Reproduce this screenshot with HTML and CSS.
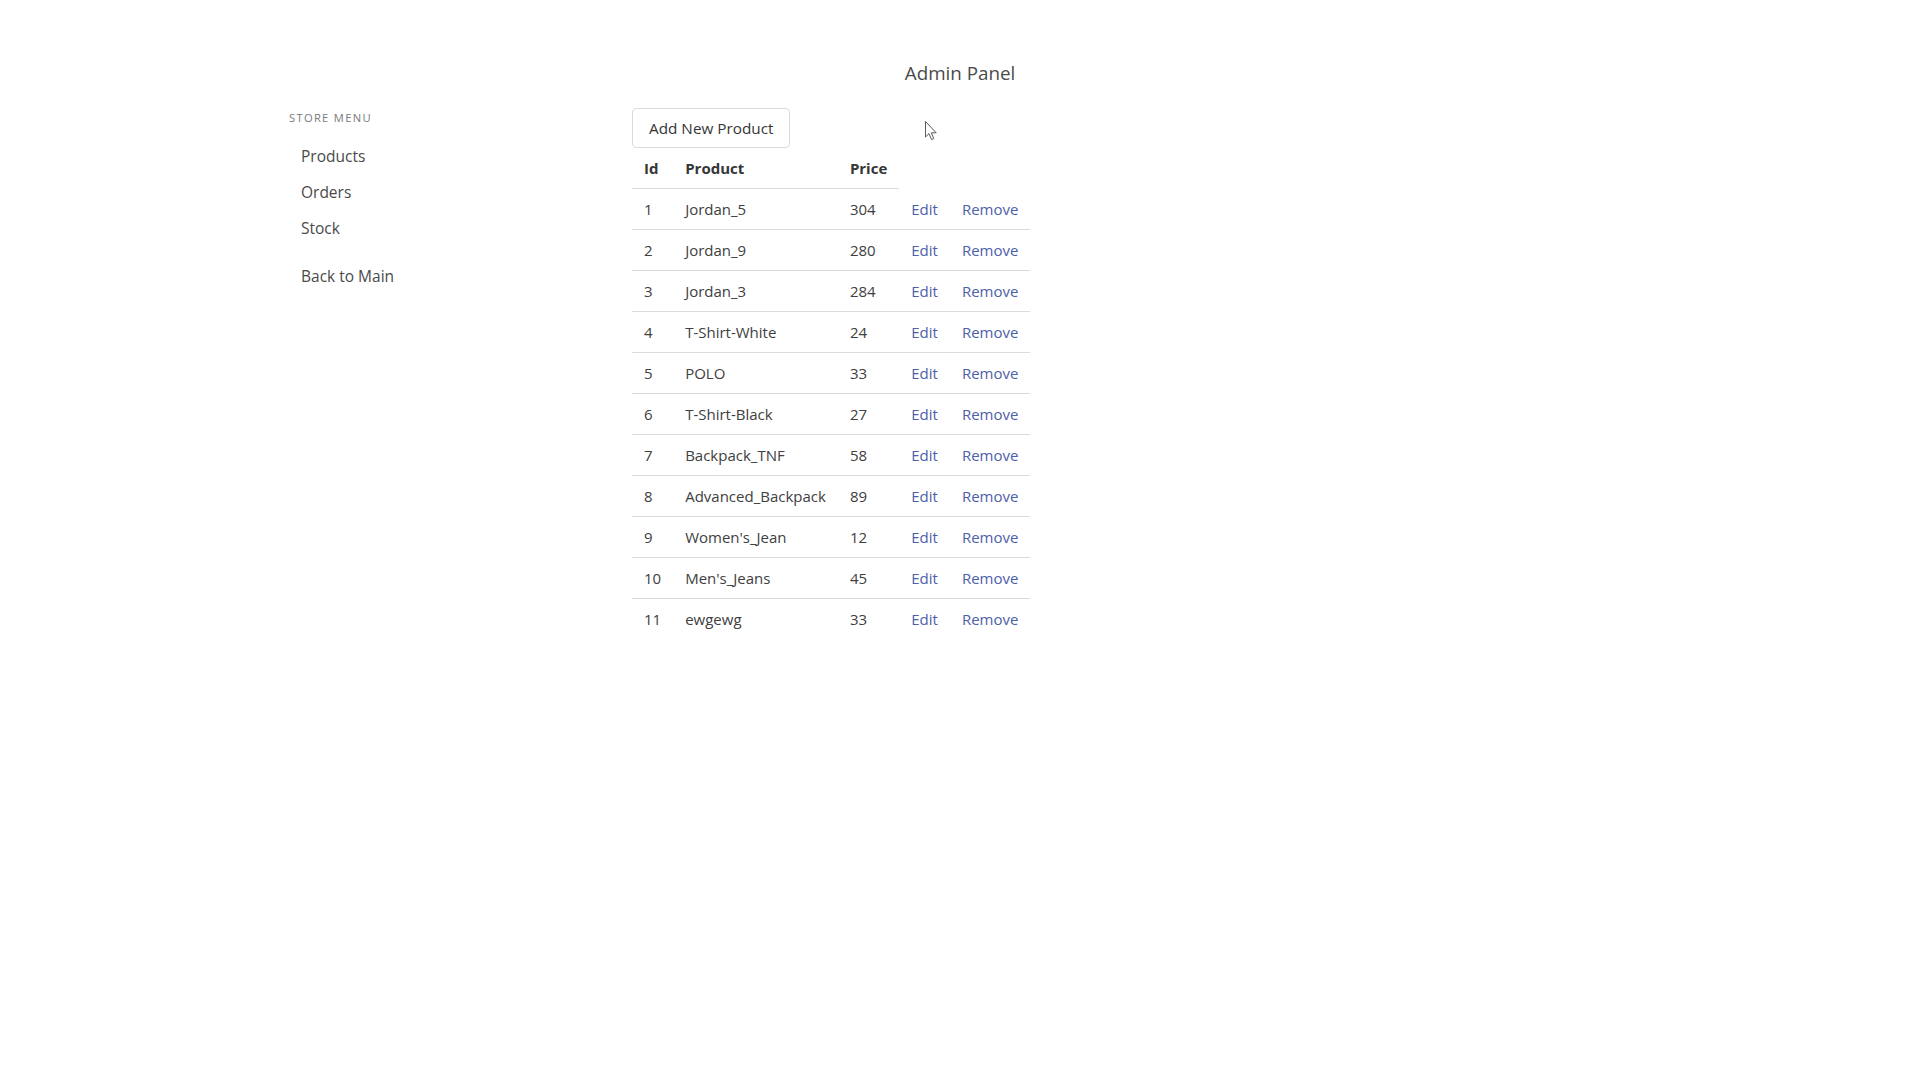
FILE: index.html
```html
<!DOCTYPE html>
<html lang="en">
<head>
<meta charset="utf-8">
<title>Admin Panel</title>
<link rel="stylesheet" href="styles.css">
</head>
<body>
<div class="container">
  <h1 class="title">Admin Panel</h1>
  <div class="columns">
    <aside class="sidebar">
      <p class="menu-label">Store Menu</p>
      <ul class="menu-list">
        <li><a href="#">Products</a></li>
        <li><a href="#">Orders</a></li>
        <li><a href="#">Stock</a></li>
      </ul>
      <ul class="menu-list back">
        <li><a href="#">Back to Main</a></li>
      </ul>
    </aside>
    <main class="main">
      <button class="btn" type="button">Add New Product</button>
      <table class="table">
        <thead>
          <tr><th>Id</th><th>Product</th><th>Price</th></tr>
        </thead>
        <tbody>
          <tr><td>1</td><td>Jordan_5</td><td>304</td><td><a href="#">Edit</a></td><td><a href="#">Remove</a></td></tr>
          <tr><td>2</td><td>Jordan_9</td><td>280</td><td><a href="#">Edit</a></td><td><a href="#">Remove</a></td></tr>
          <tr><td>3</td><td>Jordan_3</td><td>284</td><td><a href="#">Edit</a></td><td><a href="#">Remove</a></td></tr>
          <tr><td>4</td><td>T-Shirt-White</td><td>24</td><td><a href="#">Edit</a></td><td><a href="#">Remove</a></td></tr>
          <tr><td>5</td><td>POLO</td><td>33</td><td><a href="#">Edit</a></td><td><a href="#">Remove</a></td></tr>
          <tr><td>6</td><td>T-Shirt-Black</td><td>27</td><td><a href="#">Edit</a></td><td><a href="#">Remove</a></td></tr>
          <tr><td>7</td><td>Backpack_TNF</td><td>58</td><td><a href="#">Edit</a></td><td><a href="#">Remove</a></td></tr>
          <tr><td>8</td><td>Advanced_Backpack</td><td>89</td><td><a href="#">Edit</a></td><td><a href="#">Remove</a></td></tr>
          <tr><td>9</td><td>Women's_Jean</td><td>12</td><td><a href="#">Edit</a></td><td><a href="#">Remove</a></td></tr>
          <tr><td>10</td><td>Men's_Jeans</td><td>45</td><td><a href="#">Edit</a></td><td><a href="#">Remove</a></td></tr>
          <tr><td>11</td><td>ewgewg</td><td>33</td><td><a href="#">Edit</a></td><td><a href="#">Remove</a></td></tr>
        </tbody>
      </table>
    </main>
  </div>
</div>
<svg class="cursor" width="13" height="20" viewBox="0 0 13 20" aria-hidden="true">
  <path d="M0.5 0.5 L0.5 16 L4 12.6 L6.6 18.6 L8.8 17.6 L6.3 11.8 L11.2 11.8 Z" fill="#ffffff" stroke="#5a5a5a" stroke-width="1" stroke-linejoin="round"/>
</svg>
</body>
</html>
```
FILE: styles.css
```css
html, body {
  margin: 0;
  padding: 0;
  background: #ffffff;
}

body {
  font-family: "Open Sans", "Noto Sans", "Liberation Sans", sans-serif;
  font-size: 15px;
  color: #4a4a4a;
}

.container {
  width: 1344px;
  margin: 0 auto;
  padding-top: 58px;
}

.title {
  margin: 0 0 20px;
  font-size: 18.8px;
  line-height: 30px;
  font-weight: 400;
  color: #4a4a4a;
  text-align: center;
}

.columns {
  display: grid;
  grid-template-columns: 344px 1fr;
}

.menu-label {
  margin: 1px 0 11px 1px;
  font-size: 11.2px;
  line-height: 18px;
  letter-spacing: 1.3px;
  text-transform: uppercase;
  color: #7a7a7a;
}

.menu-list {
  list-style: none;
  margin: 0;
  padding: 0;
}

.menu-list a {
  display: block;
  padding: 6px 12px 6px 13px;
  line-height: 24px;
  font-size: 15.5px;
  color: #4a4a4a;
  text-decoration: none;
}

.menu-list.back {
  margin-top: 12px;
}

.btn {
  display: block;
  height: 40px;
  padding: 0 16px;
  border: 1px solid #dbdbdb;
  border-radius: 4px;
  background: #ffffff;
  font-family: inherit;
  font-size: 15.3px;
  color: #363636;
  cursor: pointer;
}

.table {
  border-collapse: collapse;
  font-size: 15px;
  color: #404040;
}

.table th,
.table td {
  padding: 8px 12px;
  line-height: 24px;
  text-align: left;
  vertical-align: top;
  border-bottom: 1px solid #dbdbdb;
}

.table th {
  font-weight: 700;
  color: #363636;
}

.table tbody tr:last-child td {
  border-bottom: 0;
}

.table a {
  color: #4d60a8;
  text-decoration: none;
}

.cursor {
  position: absolute;
  left: 925px;
  top: 121px;
}
```
